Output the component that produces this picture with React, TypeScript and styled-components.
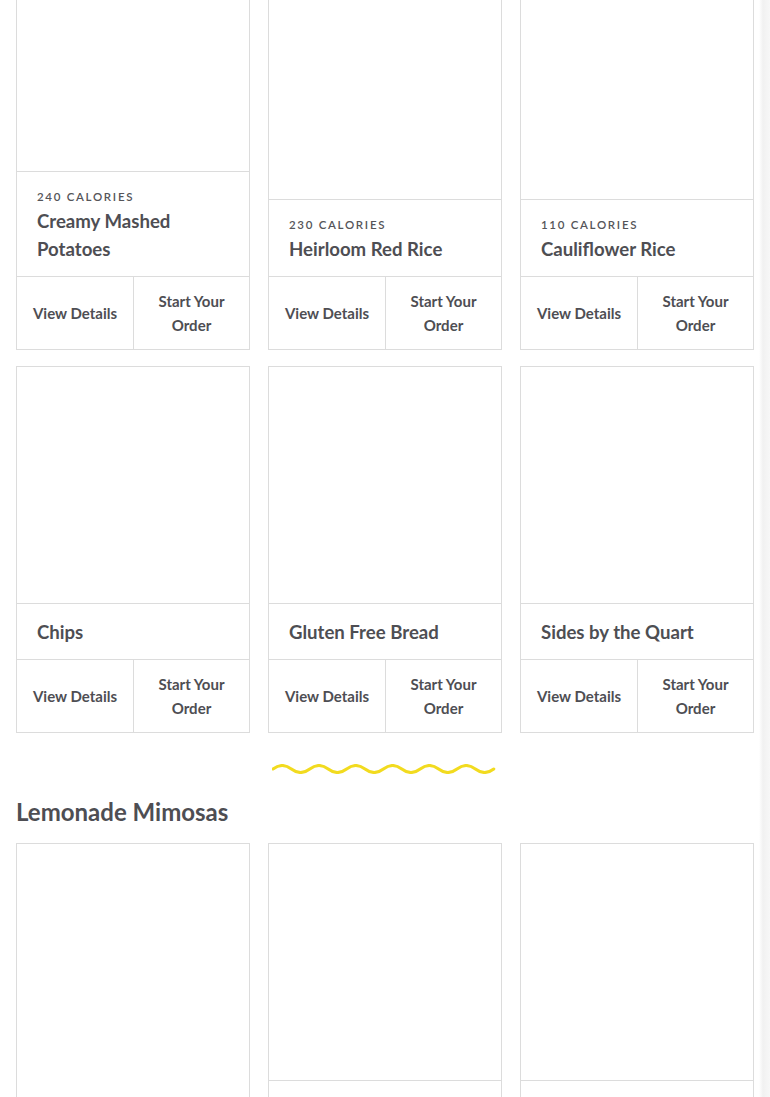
import React from "react";
import styled, { createGlobalStyle } from "styled-components";

const GlobalStyle = createGlobalStyle`
  html, body {
    margin: 0;
    padding: 0;
    background: linear-gradient(to right, #ffffff 759px, #f1f1f1 763px, #f7f7f7 770px);
    font-family: Lato, "Open Sans", Arial, sans-serif;
    color: #4e4e53;
    overflow: hidden;
  }
  * { box-sizing: border-box; }
`;

const Page = styled.main`
  width: 770px;
  padding: 0 16px;
  margin-top: -66px;
  display: flex;
  flex-direction: column;
`;

const Grid = styled.div`
  display: grid;
  grid-template-columns: repeat(3, 234px);
  column-gap: 18px;
  row-gap: 16px;
`;

const Card = styled.article`
  display: flex;
  flex-direction: column;
  border: 1px solid #dcdcdc;
  background: #fff;
`;

const Photo = styled.div`
  flex: 1;
  min-height: 236px;
  background: #fff;
`;

const Info = styled.div`
  border-top: 1px solid #dcdcdc;
  padding: 14px 20px 13px;
`;

const Calories = styled.div`
  font-size: 11.5px;
  line-height: 21px;
  font-weight: 600;
  letter-spacing: 1.7px;
  text-transform: uppercase;
  color: #555559;
`;

const Title = styled.h3`
  margin: 0;
  font-size: 18.6px;
  line-height: 28px;
  font-weight: 700;
  color: #4e4e53;
`;

const Actions = styled.div`
  display: grid;
  grid-template-columns: 1fr 1fr;
  height: 73px;
  border-top: 1px solid #dcdcdc;
`;

const Action = styled.a<{ $divider?: boolean }>`
  display: flex;
  align-items: center;
  justify-content: center;
  text-align: center;
  padding: 0 10px;
  font-size: 15px;
  line-height: 24px;
  font-weight: 700;
  color: #4e4e53;
  text-decoration: none;
  border-left: ${(p) => (p.$divider ? "1px solid #dcdcdc" : "none")};
`;

const NoWrap = styled.span`
  white-space: nowrap;
`;

const WaveRow = styled.div`
  display: flex;
  justify-content: center;
  padding-top: 31px;
  height: 63px;
`;

const SectionTitle = styled.h2`
  margin: 0 0 15px;
  font-size: 24px;
  line-height: 32px;
  font-weight: 700;
  color: #4e4e53;
`;

type Item = { cal?: string; title: string };

const sides: Item[] = [
  { cal: "240 Calories", title: "Creamy Mashed Potatoes" },
  { cal: "230 Calories", title: "Heirloom Red Rice" },
  { cal: "110 Calories", title: "Cauliflower Rice" },
  { title: "Chips" },
  { title: "Gluten Free Bread" },
  { title: "Sides by the Quart" },
];

const mimosas: Item[] = [
  { title: "Lemonade Mimosa" },
  { cal: "160 Calories", title: "Strawberry Lemonade Mimosa" },
  { cal: "170 Calories", title: "Blueberry Lemonade Mimosa" },
];

const MenuCard = ({ item }: { item: Item }) => (
  <Card>
    <Photo />
    <Info>
      {item.cal && <Calories>{item.cal}</Calories>}
      <Title>{item.title}</Title>
    </Info>
    <Actions>
      <Action href="#">
        <NoWrap>View Details</NoWrap>
      </Action>
      <Action href="#" $divider>
        Start Your Order
      </Action>
    </Actions>
  </Card>
);

const Wave = () => {
  let d = "M1 5";
  for (let i = 0; i < 12; i++) {
    d += i === 0 ? " q9.2 -7 18.4 0" : " t18.4 0";
  }
  return (
    <svg width="226" height="10" viewBox="0 0 226 10" fill="none">
      <path d={d} stroke="#f2db1f" strokeWidth="3" strokeLinecap="round" />
    </svg>
  );
};

export default function App() {
  return (
    <>
      <GlobalStyle />
      <Page>
        <Grid>
          {sides.map((s) => (
            <MenuCard key={s.title} item={s} />
          ))}
        </Grid>
        <WaveRow>
          <Wave />
        </WaveRow>
        <SectionTitle>Lemonade Mimosas</SectionTitle>
        <Grid>
          {mimosas.map((s) => (
            <MenuCard key={s.title} item={s} />
          ))}
        </Grid>
      </Page>
    </>
  );
}
